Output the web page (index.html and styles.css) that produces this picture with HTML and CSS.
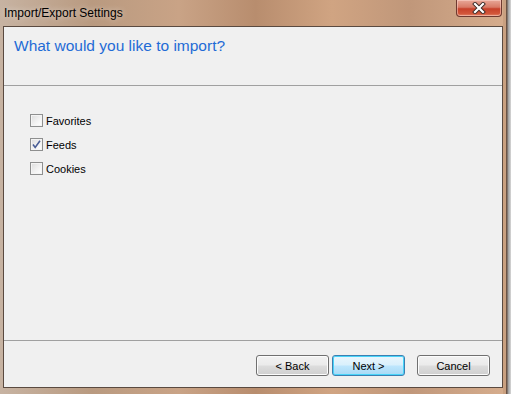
FILE: index.html
```html
<!DOCTYPE html>
<html lang="en">
<head>
    <meta charset="UTF-8">
    <title>Import/Export Settings</title>
    <link rel="stylesheet" href="styles.css">
</head>
<body>
    <div class="window">
        <div class="titlebar">
            <span class="caption">Import/Export Settings</span>
            <div class="close-btn">
                <svg width="20" height="12" viewBox="0 0 20 12">
                    <path d="M6 2 L14 10 M14 2 L6 10" stroke="#3a2a26" stroke-width="4" stroke-linecap="square"/>
                    <path d="M6 2 L14 10 M14 2 L6 10" stroke="#ffffff" stroke-width="2.2" stroke-linecap="square"/>
                </svg>
            </div>
        </div>
        <div class="client">
            <div class="header">
                <h1>What would you like to import?</h1>
            </div>
            <div class="content">
                <label class="check-row">
                    <span class="box"></span>
                    Favorites
                </label>
                <label class="check-row">
                    <span class="box">
                        <svg width="9" height="9" viewBox="0 0 9 9">
                            <path d="M1 4.5 L3.2 7.5 L8 0.8" stroke="#4a5e96" stroke-width="1.6" fill="none"/>
                        </svg>
                    </span>
                    Feeds
                </label>
                <label class="check-row">
                    <span class="box"></span>
                    Cookies
                </label>
            </div>
            <div class="footer">
                <button class="btn">&lt; Back</button>
                <button class="btn btn-default">Next &gt;</button>
                <button class="btn btn-cancel">Cancel</button>
            </div>
        </div>
    </div>
</body>
</html>
```

FILE: styles.css
```css
/* Window frame */
body {
    margin: 0;
    padding: 0;
    font-family: 'Liberation Sans', Arial, sans-serif;
}

.window {
    width: 511px;
    height: 394px;
    box-sizing: border-box;
    padding: 0 8px 6px 3px;
    display: flex;
    flex-direction: column;
    background:
        linear-gradient(to right, rgba(0,0,0,0) 0, rgba(0,0,0,0) 503px, #c9a080 503px, #c9a080 506px, #6b5446 506px, #6b5446 507px, #9a9a9a 508px, #d8d8d8 511px),
        linear-gradient(90deg, #c7b3a2 0%, #b99a80 18%, #c9a386 35%, #b88d6e 50%, #d0a482 65%, #c0977a 80%, #d7ae8e 100%);
}

.titlebar {
    height: 26px;
    display: flex;
    align-items: flex-start;
    justify-content: space-between;
}

.caption {
    font-size: 12px;
    color: #000;
    margin-top: 6px;
    margin-left: 1px;
    text-shadow: 0 0 6px rgba(255, 255, 255, 0.6);
}

.close-btn {
    width: 46px;
    height: 17px;
    margin-right: 1px;
    box-sizing: border-box;
    border: 1px solid #6e3a30;
    border-top: none;
    border-radius: 0 0 4px 4px;
    background: linear-gradient(to bottom, #e8a898 0%, #d87a66 45%, #c7412a 55%, #d2563a 85%, #e2866a 100%);
    box-shadow: inset 0 0 0 1px rgba(255, 220, 210, 0.5);
    display: flex;
    align-items: center;
    justify-content: center;
}

/* Client area */
.client {
    flex: 1;
    display: flex;
    flex-direction: column;
    background: #f0f0f0;
    border: 1px solid #5a4a40;
}

.header {
    height: 59px;
    padding: 9px 0 0 10px;
    box-sizing: border-box;
    border-bottom: 1px solid #a0a0a0;
}

.header h1 {
    margin: 0;
    font-size: 15.5px;
    font-weight: normal;
    line-height: 20px;
    color: #1f6bd6;
}

.content {
    flex: 1;
    padding: 28px 0 0 26px;
    display: flex;
    flex-direction: column;
    gap: 11px;
}

.check-row {
    display: flex;
    align-items: center;
    gap: 3px;
    font-size: 11px;
    color: #000;
    height: 13px;
}

.box {
    width: 13px;
    height: 13px;
    box-sizing: border-box;
    border: 1px solid #8e8f8f;
    background: linear-gradient(135deg, #dcdcdc 0%, #f4f4f4 60%, #ffffff 100%);
    box-shadow: inset 0 0 0 1px #f4f4f4;
    display: flex;
    align-items: center;
    justify-content: center;
}

.footer {
    height: 47px;
    box-sizing: border-box;
    border-top: 1px solid #a0a0a0;
    padding: 14px 12px 0 0;
    display: flex;
    justify-content: flex-end;
    align-items: flex-start;
    gap: 3px;
}

.btn {
    width: 73px;
    height: 21px;
    padding: 0;
    font-family: 'Liberation Sans', Arial, sans-serif;
    font-size: 11px;
    color: #000;
    border: 1px solid #707070;
    border-radius: 3px;
    background: linear-gradient(to bottom, #f2f2f2 0%, #ebebeb 48%, #dddddd 52%, #cfcfcf 100%);
    box-shadow: inset 0 0 0 1px #fcfcfc;
}

.btn-default {
    border-color: #3c7fb1;
    background: linear-gradient(to bottom, #eaf6fd 0%, #d9f0fc 48%, #bee6fd 52%, #a7d9f5 100%);
    box-shadow: inset 0 0 0 1px #48d4f9;
}

.btn-cancel {
    margin-left: 9px;
}
```
